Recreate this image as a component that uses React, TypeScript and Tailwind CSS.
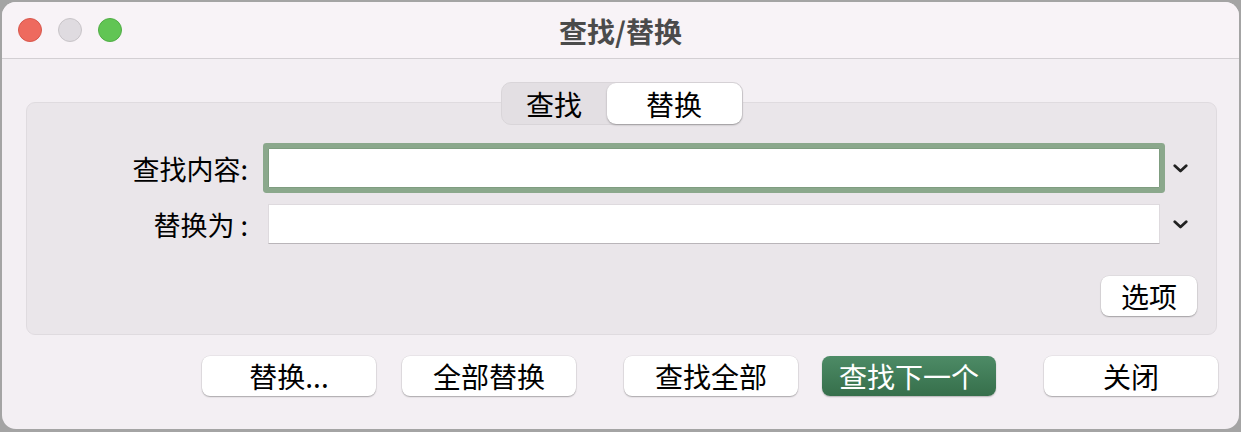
import React from "react";

const font = { fontFamily: '"Noto Sans CJK SC", "Noto Sans", sans-serif' };

function Chevron() {
  return (
    <svg width="15" height="9" viewBox="0 0 15 9" className="shrink-0">
      <polyline
        points="1.8,1.8 7.5,7 13.2,1.8"
        fill="none"
        stroke="#222"
        strokeWidth="2.8"
        strokeLinecap="round"
        strokeLinejoin="round"
      />
    </svg>
  );
}

function Btn({
  children,
  className = "",
  primary = false,
}: {
  children: React.ReactNode;
  className?: string;
  primary?: boolean;
}) {
  return (
    <div
      className={
        "h-[40px] shrink-0 flex items-center justify-center rounded-[8px] text-[28px] leading-none " +
        (primary
          ? "bg-gradient-to-b from-[#4d8b66] to-[#366f4b] text-white shadow-[0_1px_1.5px_rgba(0,0,0,0.25)] "
          : "bg-white text-black shadow-[0_1px_1.5px_rgba(0,0,0,0.28),0_0_0_0.5px_rgba(0,0,0,0.08)] ") +
        className
      }
    >
      {children}
    </div>
  );
}

export default function App() {
  return (
    <div className="w-[1241px] h-[432px] bg-[#a4a4a4] pt-[2px] pl-[2px] pr-[2px] pb-[3px]" style={font}>
      <div className="w-full h-full rounded-[14px] overflow-hidden bg-[#f3eff3] flex flex-col">
        {/* title bar */}
        <div className="h-[57px] shrink-0 bg-[#f8f3f7] border-b border-[#d3cfd3] flex items-center relative">
          <div className="flex items-center gap-[16px] pl-[16px]">
            <div className="w-[24px] h-[24px] rounded-full bg-[#ee6a5e] border border-[#d8574c]" />
            <div className="w-[24px] h-[24px] rounded-full bg-[#dfdbe0] border border-[#c8c4c8]" />
            <div className="w-[24px] h-[24px] rounded-full bg-[#61c554] border border-[#50ad45]" />
          </div>
          <div className="absolute inset-0 flex items-center justify-center text-[28px] font-bold text-[#4b4b4b] pointer-events-none leading-none pt-[1px]">
            查找/替换
          </div>
        </div>

        {/* body */}
        <div className="flex-1 flex flex-col pl-[24px] pr-[22px] pt-[23px]">
          {/* segmented control */}
          <div className="relative z-10 self-center h-[43px] w-[242px] rounded-[10px] bg-[#e3dfe3] border border-[#d9d5d9] flex items-center text-[28px] leading-none text-black">
            <div className="w-[105px] h-full flex items-center justify-center">查找</div>
            <div className="flex-1 h-[41px] rounded-[9px] bg-white shadow-[0_1px_2px_rgba(0,0,0,0.3)] flex items-center justify-center">
              替换
            </div>
          </div>

          {/* group box */}
          <div className="-mt-[23px] h-[233px] rounded-[9px] bg-[#eae6ea] border border-[#dfdbdf] pt-[45px] pb-[18px] pr-[28px] flex flex-col">
            <div className="flex items-center h-[40px]">
              <div className="w-[221px] text-right text-[27px] leading-none text-black">查找内容:</div>
              <div className="ml-[20px] flex-1 h-[40px] bg-white rounded-[1px] border border-[#7f9d80] shadow-[0_0_0_5px_#8ba88c]" />
              <div className="ml-[13px] w-[15px] flex justify-center">
                <Chevron />
              </div>
            </div>
            <div className="flex items-center h-[40px] mt-[16px]">
              <div className="w-[221px] text-right text-[27px] leading-none text-black">
                替换为<span className="ml-[6px]">:</span>
              </div>
              <div className="ml-[20px] flex-1 h-[40px] bg-white border border-[#dedade] border-b-[#b9b5b9]" />
              <div className="ml-[13px] w-[15px] flex justify-center">
                <Chevron />
              </div>
            </div>
            <div className="mt-[32px] flex justify-end -mr-[9px]">
              <Btn className="w-[96px]">选项</Btn>
            </div>
          </div>

          {/* bottom buttons */}
          <div className="mt-[21px] flex items-center pl-[176px]">
            <Btn className="w-[174px]">替换...</Btn>
            <Btn className="w-[174px] ml-[26px]">全部替换</Btn>
            <Btn className="w-[174px] ml-[48px]">查找全部</Btn>
            <Btn className="w-[174px] ml-[24px]" primary>
              查找下一个
            </Btn>
            <Btn className="w-[174px] ml-[48px]">关闭</Btn>
          </div>
        </div>
      </div>
    </div>
  );
}
